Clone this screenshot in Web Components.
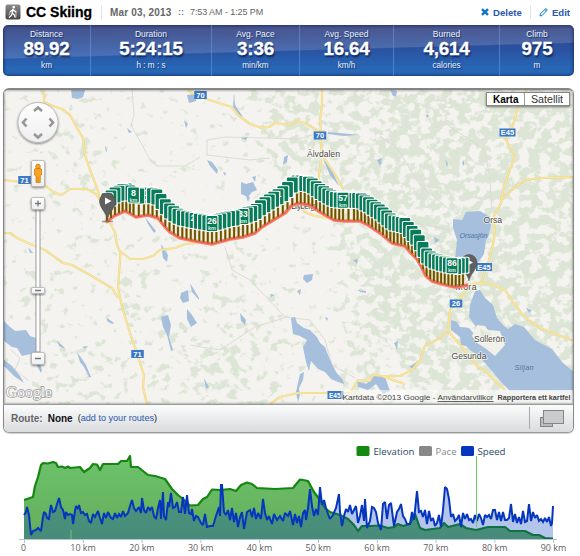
<!DOCTYPE html>
<html lang="en"><head><meta charset="utf-8"><title>CC Skiing</title>
<style>
body{margin:0;background:#fff;width:580px;height:556px;overflow:hidden;font-family:"Liberation Sans",Arial,sans-serif}
</style></head><body>
<activity-page></activity-page>
<script>
const define=(name,html,after)=>{
  const t=document.createElement('template');t.innerHTML=html;
  customElements.define(name,class extends HTMLElement{
    constructor(){super();this.attachShadow({mode:'open'}).append(t.content.cloneNode(true));}
    connectedCallback(){if(after)after(this.shadowRoot,this);}
  });
};
const line=p=>'M'+p.trim().split(/\s+/).join('L');
const pts=p=>p.trim().split(/\s+/).map(s=>s.split(',').map(Number));
const at=(table,x)=>{
  for(let i=1;i<table.length;i++)if(x<=table[i][0]){
    const [a,b]=table[i-1],[c,d]=table[i];return b+(d-b)*(x-a)/(c-a);}
  return table[table.length-1][1];
};

define('activity-header',`<style>
:host{display:flex;align-items:center;height:25px;padding:0 10px 1px 5px;box-sizing:border-box;white-space:nowrap}
svg{flex:none}
h1{font-size:14px;line-height:16px;margin:0 0 0 5px;color:#000;width:67px;-webkit-text-stroke:.3px #000}
.sep{width:1px;height:13px;background:#e2e2e2;margin:0 8px}
.date{font-weight:bold;font-size:10px;letter-spacing:.17px;color:#666;width:62px}
.dots{font-weight:bold;font-size:9px;color:#777;margin:0 6px 0 6px}
.time{font-size:9px;color:#666;letter-spacing:-.08px}
.act{margin-left:auto;display:flex;align-items:center;font-weight:bold;font-size:9.6px;color:#2a56ae}
.act svg{margin-right:4px}.act .sep{margin:0 8px}
</style>
<svg width="16" height="16" viewBox="0 0 16 16"><defs><linearGradient id="g" x2="0" y2="1"><stop stop-color="#8b8b8b"/><stop offset="1" stop-color="#454545"/></linearGradient></defs><rect x=".5" y=".5" width="15" height="15" rx="2" fill="url(#g)"/><g fill="none" stroke="#fff" stroke-width="1.3" stroke-linecap="round"><circle cx="8.7" cy="3.2" r=".7" fill="#fff"/><path d="M8 5.4L7.3 9L9.5 11L10 13.2M7.3 9L6.4 11.4L4.4 13.2M8 5.6L5.6 7.5M8.3 5.8L10.6 7.8"/><path d="M11 7V13M5.3 7.6L4 11" stroke-width=".6"/></g></svg>
<h1>CC Skiing</h1><span class="sep"></span><span class="date">Mar 03, 2013</span><span class="dots">::</span><span class="time">7:53 AM - 1:25 PM</span>
<span class="act"><svg width="8" height="8" viewBox="0 0 8 8"><path d="M1 1.2L7 6.8M7 1.2L1 6.8" stroke="#1673c0" stroke-width="2.5"/></svg>Delete<span class="sep"></span><svg width="9" height="9" viewBox="0 0 9 9"><path d="M1 8L1.5 5.7L6 1.2Q7 .4 7.8 1.2Q8.5 2 7.6 2.9L3.2 7.4ZM5.4 1.8L7 3.4" fill="#eaf5fc" stroke="#1680c8"/></svg>Edit</span>`);

define('stat-cell',`<style>
:host{display:flex;flex-direction:column;align-items:center;color:#fff;position:relative;padding-top:4px;box-sizing:border-box;text-shadow:1px 1px 1px rgba(0,20,70,.65);
border-right:1px solid rgba(110,155,220,.55)}
:host(:last-child){border-right:0}
.l,.u{font-size:8.5px;line-height:10px;color:#eef3fc}.v{font-weight:bold;font-size:18.8px;line-height:20px;height:21px;letter-spacing:-.15px;-webkit-text-stroke:.3px #fff;text-shadow:1px 2px 2px rgba(0,20,70,.8)}
.u{margin-top:1px;font-size:8.2px}
</style><span class="l"><slot name="label"></slot></span><span class="v"><slot></slot></span><span class="u"><slot name="unit"></slot></span>`);

define('stats-bar',`<style>
:host{display:grid;grid-template-columns:88px 121px 88px 94px 106px 74px;width:571px;height:51px;margin-left:3px;border-radius:5px;overflow:hidden;box-sizing:border-box;
background:linear-gradient(178.4deg,rgba(255,255,255,.07),rgba(255,255,255,.15) 49.4%,transparent 51.2%),linear-gradient(#36427f,#2b519f 45%,#2765b5 82%,#2969b8);
box-shadow:inset 0 0 3px 1px rgba(20,35,90,.7)}
</style>
<stat-cell><span slot="label">Distance</span>89.92<span slot="unit">km</span></stat-cell>
<stat-cell><span slot="label">Duration</span>5:24:15<span slot="unit">h : m : s</span></stat-cell>
<stat-cell><span slot="label">Avg. Pace</span>3:36<span slot="unit">min/km</span></stat-cell>
<stat-cell><span slot="label">Avg. Speed</span>16.64<span slot="unit">km/h</span></stat-cell>
<stat-cell><span slot="label">Burned</span>4,614<span slot="unit">calories</span></stat-cell>
<stat-cell><span slot="label">Climb</span>975<span slot="unit">m</span></stat-cell>`);

const ROADS=[
'44,89 44,102 53,106 62,109 70,115 77,128 83,138 85,155 90,170 97,188 107,218 115,232 117,245 120.5,253 118,287 122,307 130,333 138,357 144,375 143,387 147,404',
'4,180 12,181 30,183 46,186 52,191 60,195 65,193 70,189 87,189 96,194 100,200 107,216',
'4,233 10,233 17,238 30,244 45,250 63,263 72,265 90,275 112,288 118,298',
'120,252 124,254 130,259 143,259 153,256 160,250 175,248 185,244 198,243',
'185,86 190,92 200,97 222,104 232,107 238,115 250,124 262,128 269,127 275,123 290,125 297,121 305,123 320,132 322,155 335,174 343,189',
'322,89 322,105 320,120 321,132','321,160 319,175 319,190','298,205 305,212 315,216 334,219',
'527,89 518,107 513,125 505,137 508,144 515,156 508,175 503,190 501,203 494,216 493,222 495,228 494,240 489,260 481,283 470,284',
'501,200 515,187 525,180 540,178 574,177',
'481,283 490,284 505,290 513,302 522,314 530,321 540,328 558,335 574,341',
'468,288 458,300 450,310 448,330 440,338 425,346 420,360 412,370 400,376 380,376',
'448,331 460,345 478,367 485,371 492,378 505,390','270,404 280,397 298,393 330,393 350,393 358,380 370,381 373,374 382,376 390,379 405,384'];
const LAKES=[
'71,89 85,90 83,97 78,99 72,98','4,321 10,327 15,331 26,330 30,336 36,338 37,352 30,354 22,356 17,348 12,347 4,341','4,360 12,366 20,376 24,383 14,376 4,366','36,352 42,370 41,373 37,366',
'57,341 64,347 65,349 59,346','77,352 82,359 86,365 91,377 89,377 84,367 80,362','107,318 114,323 112,324 107,321','82,347 88,346 85,349',
'161,317 168,315 171,325 169,337 173,350 171,351 167,335 163,327','190,283 199,298 199,300 192,292','181,293 188,290 189,301 183,303 180,298','187,309 192,315 197,323 191,327 187,319',
'291,318 295,317 297,323 304,328 310,330 317,337 320,343 325,347 330,360 336,372 343,380 344,384 338,382 331,379 325,372 318,369 311,361 309,371 306,362 303,347 307,340 300,336 293,334',
'300,374 304,372 303,380 299,388 300,395 298,402 296,392','240,313 246,320 245,325 241,321','304,275 313,274 312,280 307,283 303,279','297,291 301,289 300,295','270,294 275,295 271,297',
'357,381 366,384 374,376 385,377 390,391 383,394 376,384 368,390 358,387','204,378 209,387 206,389','28,247 33,253 30,253','161,244 168,255 167,262 163,258','130,254 137,262',
'453,219 462,220 466,212 480,211 490,217 491,225 489,235 486,240 484,254 477,264 468,263 455,260 457,240 453,228',
'475,291 480,290 485,298 493,305 497,318 503,325 508,329 515,324 524,327 535,340 552,349 562,362 574,372 574,391 510,391 500,381 492,371 484,362 479,356 470,350 466,346 461,345 460,337 451,330 451,320 457,322 460,327 469,328 474,334 476,327 469,317 470,305',
'187,95 195,94 196,101 189,103','234,94 235,105 243,117 238,115 233,107','328,132 350,134 358,135 344,136 328,134','323,159 331,168 339,186 330,175','105,146 107,150 106,153',
'207,160 212,162 218,170 217,174 210,166','223,172 226,173 225,176','241,182 246,184 253,182 257,190 252,192 248,197 241,194','252,177 256,176 255,182','246,196 250,197 248,202','284,157 288,155 287,162 283,165','241,138 248,137 246,140','377,160 382,158 380,166',
'391,90 397,91 396,97 392,95','127,128 132,132 129,133','145,217 156,231 154,233 148,224','394,343 398,341 397,350','409,367 417,362 415,369','445,159 448,164 447,167','462,163 464,160 464,166','494,213 505,203 497,210','434,237 440,240 435,243','353,260 358,259 357,264','357,290 366,291 366,293 361,292','325,317 328,318 327,321','184,120 188,124 186,128','380,375 387,390 382,388','380,161 382,163 380,165','526,308 532,310 529,313','426,115 429,115 427,118'];
const TRAIL=pts('106,222 109,220 114,216 125,211 131,214 136,217 148,215 158,218 165,227 170,232 180,238 190,240 200,242 212,244 230,239 243,237 255,233 262,227 275,219 285,213 291,206 298,203 310,205 320,212 334,220 345,221 360,221 368,225 380,233 392,243 405,246 411,253 417,259 422,268 426,276 432,281 442,284 455,287 468,285');
const KM=pts('1,107 4,119 8,133.5 10,144 26,212 33,243 41,278 45,297 57,343 59,354 86,452 89,463');
/* Text left readable on the stacked kilometre signs: [glyphs, x offset, width, unit] */
const FACES={8:['8',0,5,'km'],10:['0',1.5,5,'m'],22:['2',-2,4.5,''],26:['26',0,9.5,'km'],33:['33',0,9.5,'km'],41:['1',1.5,4,''],46:['4',0,4.5,''],57:['57',0,9.5,'km'],59:['9',2.5,5,'m'],86:['86',0,9.5,'km']};

define('route-map',`<style>:host{display:block;height:314px}svg{display:block}
text{font-family:"Liberation Sans",Arial,sans-serif}</style>
<svg width="569" height="314" viewBox="4 90 569 314">
<defs>
<filter id="forest" filterUnits="userSpaceOnUse" x="4" y="88" width="570" height="317" color-interpolation-filters="sRGB">
<feGaussianBlur in="SourceGraphic" stdDeviation="8" result="d"/>
<feTurbulence type="fractalNoise" baseFrequency=".1 .115" numOctaves="3" seed="5"/>
<feColorMatrix values="0 0 0 0 0  0 0 0 0 0  0 0 0 0 0  1 0 0 0 0" result="n"/>
<feComposite in="n" in2="d" operator="arithmetic" k2="1" k3=".34"/>
<feColorMatrix values="0 0 0 0 .867  0 0 0 0 .902  0 0 0 0 .839  0 0 0 9 -5.85"/></filter>
<filter id="sh" x="-30%" y="-30%" width="160%" height="170%"><feDropShadow dx="0" dy="1" stdDeviation="1" flood-opacity=".5"/></filter>
<linearGradient id="b" x2="0" y2="1"><stop stop-color="#fff"/><stop offset="1" stop-color="#eee"/></linearGradient>
</defs>
<rect x="4" y="88" width="571" height="317" fill="#f4f3ef"/>
<g filter="url(#forest)"><path fill-opacity=".68" d="M385 80H600V420H430L385 340L370 280L375 190Z"/><path fill-opacity=".5" d="M240 80H385V420H345L350 300L330 240L345 200L300 170L260 110ZM78 135H96V200H84ZM120 260H142V320H120ZM225 240H245V275H228ZM190 340H235V404H190Z"/><path fill-opacity=".3" d="M45 110H75V190H60ZM75 200H100V238H75ZM40 345H120V404H40ZM20 270H60V320H25ZM130 315H185V404H155ZM205 290H290V404H235ZM240 110H310V180H270Z"/></g>
<g fill="none" stroke="#dcdbd5" stroke-width="1"><path d="M132 89L134 115L131 125L140 141L150 160L157 166L185 166L200 157M207 155V140L225 137L300 139L325 130M225 247L232 270L250 280L285 317L310 320L325 340L332 365L355 378M190 345L220 350L255 327L287 317M380 136L397 148L420 185L450 210M440 120L485 150L490 180L492 210M500 200L520 180M207 155L250 160L270 158M400 220L450 230M10 349L20 358L15 370L28 380"/></g>
<g id="lakes" fill="#a5bfdd"></g>
<path d="M477 325L485 326L488 330L500 331L505 345L495 356L485 348L477 343L472 336Z" fill="#f1f1ea"/><path d="M480 328l5 4 6 1-2 7-8-3zM495 335l5 3-4 6z" fill="#dfe7d7"/>
<g id="roads" fill="none" stroke-linejoin="round"></g>
<g id="shields"></g><g id="towns"></g>
<g id="trail"></g>
<g id="controls">
<circle cx="38" cy="122.500" r="20" fill="url(#b)" stroke="#aaa" stroke-width=".7" filter="url(#sh)"/>
<path d="M34 111L38 107.500L42 111M34 134L38 137.500L42 134M26.500 118.500L23 122.500L26.500 126.500M49.500 118.500L53 122.500L49.500 126.500" fill="none" stroke="#969696" stroke-width="2.600"/>
<rect x="31.500" y="160.500" width="13" height="26" rx="1.500" fill="url(#b)" stroke="#aaa" stroke-width=".7" filter="url(#sh)"/>
<g fill="#f9a51b" stroke="#ba6515" stroke-width=".6"><path d="M34.500 169Q38 167 41.500 169V175L40.300 176V182.500H36V176L34.500 175Z"/><circle cx="38" cy="166.500" r="2.400"/></g><path d="M38 177V182" stroke="#c87516" stroke-width=".6"/>
<path d="M36 209H40V352H36Z" fill="#fff" stroke="#999" stroke-width="1"/>
<g fill="url(#b)" stroke="#aaa" stroke-width=".7"><rect x="31.500" y="197.500" width="13" height="12" rx="1.500" filter="url(#sh)"/><rect x="31.500" y="287.500" width="13" height="6" rx="1" filter="url(#sh)"/><rect x="31.500" y="352.500" width="13" height="12" rx="1.500" filter="url(#sh)"/></g>
<path d="M35 203.500H41M38 200.500V206.500M35 290.500H41M35 358.500H41" stroke="#777" stroke-width="1.300"/>
<text x="6" y="396.500" textLength="46" lengthAdjust="spacingAndGlyphs" style="font:15px 'Liberation Serif',serif" fill="#fff" stroke="#9a9a9a" stroke-width="1.400" paint-order="stroke">Google</text>
<rect x="341" y="390" width="154" height="14" fill="#fff" opacity=".5"/><rect x="495" y="390" width="80" height="14" fill="#f5f5f5" opacity=".9"/>
<text x="342.500" y="400" font-size="8" textLength="93" lengthAdjust="spacingAndGlyphs" fill="#444">Kartdata ©2013 Google -</text><text x="437.500" y="400" font-size="8" textLength="56" lengthAdjust="spacingAndGlyphs" fill="#444" text-decoration="underline">Användarvillkor</text><text x="497.500" y="400" font-size="7.500" font-weight="bold" textLength="73" lengthAdjust="spacingAndGlyphs" fill="#444">Rapportera ett kartfel</text>
<rect x="486.500" y="92.500" width="83" height="13" fill="#fff" stroke="#888" filter="url(#sh)"/><path d="M524.500 93V105" stroke="#999"/>
<text x="493" y="102.500" font-size="10" font-weight="bold" textLength="25.500" lengthAdjust="spacingAndGlyphs" fill="#000">Karta</text><text x="531" y="102.500" font-size="10" textLength="32" lengthAdjust="spacingAndGlyphs" fill="#333">Satellit</text>
</g></svg>`,(r)=>{
  const q=s=>r.querySelector(s);
  q('#lakes').innerHTML=LAKES.map(l=>`<path d="${line(l)}Z"/>`).join('');
  const d=ROADS.map(line).join('');
  q('#roads').innerHTML=`<path d="${d}" stroke="#e9d38b" stroke-width="2.200"/><path d="${d}" stroke="#f9e69b" stroke-width="1.400"/>`;
  q('#shields').innerHTML=[[200.5,95,'70'],[320,135.5,'70'],[24.5,180,'71'],[137.5,354,'71'],[507.5,132.5,'E45'],[484,267,'E45'],[456,303.5,'26'],[335.5,395,'E45']].map(([x,y,t],i)=>{
    const w=t.length>2?16:12.5,cx=i===7?334.8:x,fs=i===7?6.5:7.5;return `<rect x="${x-w/2}" y="${y-4}" width="${w}" height="8" fill="#3b78c7"/><text x="${cx}" y="${y+2.7}" font-size="${fs}" font-weight="bold" text-anchor="middle" fill="#fff">${t}</text>`}).join('');
  q('#towns').innerHTML=[[307,157,'Älvdalen',33],[483.5,222.5,'Orsa',18.5],[455.5,289.5,'Mora',21],[474,342,'Sollerön',31],[451.5,359,'Gesunda',35],[291,209,'Blyberg',24]].map(([x,y,t,w])=>`<text x="${x}" y="${y}" font-size="8.700" textLength="${w}" fill="#4b4540" stroke="#fff" stroke-opacity=".75" stroke-width="1.500" paint-order="stroke">${t}</text>`).join('')
   +[[459.5,237.5,'Orsasjön',28],[514.5,369.5,'Siljan',19]].map(([x,y,t,w])=>`<text x="${x}" y="${y}" font-size="7.300" font-style="italic" textLength="${w}" fill="#5374a4">${t}</text>`).join('');
  const td='M'+TRAIL.map(p=>p.join(',')).join('L');
  const pin=(x,y)=>`<g transform="translate(${x} ${y})"><path d="M0 0C-1 -7 -8 -11 -8 -18.500A8 8 0 0 1 8 -18.500C8 -11 1 -7 0 0Z" fill="#606060" stroke="#4d4d4d" stroke-width=".5"/><path d="M-2.500 -22V-15L4 -18.500Z" fill="#fff"/></g>`;
  let s=`<path d="${td}" fill="none" stroke="#fa7d6e" stroke-width="3.500" stroke-linejoin="round"/><path d="${td}" fill="none" stroke="#e54434" stroke-width=".7"/>`+pin(469,281);
  const signs=[],lift={8:2,57:2,33:1,86:3};
  for(let k=1;k<90;k++){const x=at(KM,k),y=at(TRAIL,x);signs.push({k,x,y,z:y+(lift[k]||0)});}
  signs.sort((a,b)=>a.z-b.z);
  for(const {k,x,y} of signs){
    s+=`<g transform="translate(${x.toFixed(1)} ${(y-.5).toFixed(1)})"><path d="M0 -12V0" stroke="#d3b36a" stroke-width="2.600"/><path d="M0 -12V0" stroke="#6b5200" stroke-width="1.800"/><rect x="-6.500" y="-28.500" width="13" height="17" rx="1.500" fill="#fff"/><rect x="-5.400" y="-27.500" width="10.800" height="15" rx="1" fill="#087b59"/>`;
    const f=FACES[k];
    if(f)s+=`<text x="${f[1]-f[2]/2}" y="-19.500" font-size="8.500" font-weight="bold" textLength="${f[2]}" lengthAdjust="spacingAndGlyphs" fill="#fff">${f[0]}</text>`+(f[3]?`<text x="${f[1]}" y="-13.500" font-size="5.500" font-weight="bold" text-anchor="middle" fill="#d8eee5">${f[3]}</text>`:'');
    s+='</g>';
  }
  q('#trail').innerHTML=s+pin(107.5,219.5)+'<path d="M102 221.500H113" stroke="#555" stroke-opacity=".55" stroke-width="1.500"/>';
});

define('route-panel',`<style>
:host{display:block;width:571px;height:345px;margin:12px 0 0 3px;box-sizing:border-box;border:1px solid #888;border-top:2px solid #858585;border-bottom-color:#999;border-radius:6px;overflow:hidden;box-shadow:0 1px 1px rgba(0,0,0,.18)}
.map{height:314px;position:relative;overflow:hidden}
.map::after{content:"";position:absolute;inset:0;box-shadow:inset 0 0 2px 1px rgba(0,0,0,.25);pointer-events:none}
footer{display:flex;align-items:center;height:28px;box-sizing:border-box;border-top:1px solid #999;background:linear-gradient(#fbfcfc,#d9dbdd);padding:0 8px 1px 7px;font-size:10px}
b{margin-right:5px}.r{color:#666}.n{color:#111}.a{font-size:9.100px;color:#222}.a i{font-style:normal;color:#2857ae}
.end{margin-left:auto;display:flex;align-items:center;gap:9px}.end span{width:1px;height:22px;background:#aaa}
</style><div class="map"><route-map></route-map></div>
<footer><b class="r">Route:</b><b class="n">None</b><span class="a">(<i>add to your routes</i>)</span>
<div class="end"><span></span><svg width="26" height="19" viewBox="0 0 26 19"><rect x="1.500" y="8.500" width="12" height="9" fill="#bbb" stroke="#858585"/><rect x="4.500" y="1.500" width="20" height="13" fill="#c9cbcc" stroke="#858585"/></svg></div></footer>`);

const ELEV='24,500 30,498 33,497 35,486 38,477 41,465 43,463 48,463.5 53,462 56,463 58,467 62,466.500 65,468 68,466.500 70,468 80,467 84,472 90,468 93,464 97,464.500 100,470 103,464 118,464 121,461 127,461 130,456 131,467 138,467 148,475 155,476 165,479 172,489 178,495 183,499 188,504 190,505.500 198,505 203,499 207,497 212,489.500 220,490 230,489 236,491 241,485 247,482.500 252,484 257,488 275,489 293,488 300,479.500 303,480 308,481 314,492 320,500 325,508 330,512 340,515 348,519 354,525 358,531 362,526 370,526 380,525.500 388,528 394,527 398,524 403,526 410,524 415,514 420,528 425,530 440,528 444,523 448,527 460,524 466,528 476,530 488,527 505,527 510,531 525,531 533,535 539,535 545,538 553,538.500';
const SPEED='24,515 26,512 27,507 29,515 31,535 33,531 36,530 38,528 40,530 41,531 43,517 44,512 46,514 47,518 49,519 50,511 51,505 53,512 55,511 57,504 59,498 61,507 63,510 65,519 66,512 68,515 70,514 72,515 73,524 75,511 76,506 78,509 79,505 81,513 83,512 85,515 87,514 89,521 91,523 93,514 95,517 98,511 100,518 102,524 104,513 106,518 108,512 111,518 113,519 115,513 117,518 119,514 121,517 123,511 125,516 128,513 130,506 132,500 134,508 136,511 139,507 141,513 142,498 144,510 146,513 148,507 150,510 152,507 154,516 156,519 158,508 160,500 161,519 163,492 164,516 166,520 168,502 169,507 171,493 173,508 175,507 177,502 179,512 181,512 183,497 185,514 187,495 189,513 191,514 192,509 194,521 196,516 198,517 201,523 203,525 205,514 207,527 210,526 213,526 216,516 219,507 220,516 221,485 222,485 224,512 226,515 228,510 230,520 232,508 234,522 236,513 238,527 240,517 242,512 244,529 247,512 250,510 252,517 254,508 256,519 258,513 261,519 263,499 265,513 267,520 269,516 272,524 274,514 277,520 280,516 283,521 285,513 288,516 290,511 293,525 295,514 297,523 299,516 301,527 303,513 305,510 306,520 308,508 310,489 312,506 314,516 316,509 318,515 320,487 322,505 324,500 326,508 328,514 330,519 333,515 336,508 339,494 340,512 342,526 344,516 346,509 348,512 350,505 352,514 354,510 356,506 358,523 360,516 362,505 364,521 365,499 367,528 370,521 372,507 374,508 376,512 378,523 381,530 383,504 385,502 387,519 389,505 391,503 394,526 397,512 399,509 401,504 403,516 405,519 407,524 410,524 412,512 414,520 417,491 419,512 421,511 423,517 425,510 427,524 429,511 431,521 433,518 435,526 437,523 439,515 441,527 443,510 445,487 447,489 449,499 451,517 453,514 455,521 457,519 459,515 461,527 463,513 465,519 467,514 469,520 471,519 473,523 475,515 477,521 479,514 481,518 483,525 485,515 487,517 489,515 491,519 493,510 495,510 497,520 499,512 501,521 503,512 505,520 507,520 509,518 511,504 513,522 515,514 517,523 519,517 521,524 523,511 525,522 527,521 529,504 531,521 533,512 535,518 537,515 539,521 541,519 543,522 545,518 547,522 549,517 551,526 552,523 553,506';
define('activity-chart',`<style>:host{display:block;margin-top:2px}svg{display:block}text{font-family:"Open Sans","Noto Sans",sans-serif}</style>
<svg width="580" height="121" viewBox="0 435 580 121"><defs><linearGradient id="e" gradientUnits="userSpaceOnUse" y1="455" y2="539" x2="0"><stop stop-color="#6dc36d"/><stop offset="1" stop-color="#64ad59"/></linearGradient></defs>
<g id="plot"></g><g id="axis"></g>
<rect x="356.500" y="446" width="13" height="10" rx="1.500" fill="#168a10"/><rect x="419" y="446" width="13" height="10" rx="1.500" fill="#888"/><rect x="461" y="446" width="13" height="10" rx="1.500" fill="#0636bd"/>
<g font-size="9.600"><text x="373.500" y="454.500" textLength="41" lengthAdjust="spacingAndGlyphs" fill="#2c4963">Elevation</text><text x="435.500" y="454.500" textLength="21" lengthAdjust="spacingAndGlyphs" fill="#888">Pace</text><text x="477.500" y="454.500" textLength="28" lengthAdjust="spacingAndGlyphs" fill="#2c4963">Speed</text></g></svg>`,(r)=>{
  r.querySelector('#plot').innerHTML=`<path d="${line(ELEV)}V539H24Z" fill="url(#e)"/><path d="${line(ELEV)}" fill="none" stroke="#158710" stroke-width="2.200" stroke-linejoin="round"/>
  <path d="${line(SPEED)}V539H24Z" fill="#0640c0" fill-opacity=".3"/><path d="${line(SPEED)}" fill="none" stroke="#0636bd" stroke-width="2" stroke-linejoin="miter" stroke-miterlimit="2"/>
  <path d="M476.500 456V527M71 530V539" stroke="#74c36b"/>`;
  let s='<path d="M19 539.500H557" stroke="#b2c4d6"/>';
  for(let i=0;i<10;i++){const x=24.5+i*58.8,w=i?25.5:5,c=x-(i?.2:1);s+=`<path d="M${x} 540V543" stroke="#b2c4d6"/><text x="${c-w/2}" y="551" font-size="9" textLength="${w}" lengthAdjust="spacingAndGlyphs" fill="#606060">${i?i*10+' km':'0'}</text>`;}
  r.querySelector('#axis').innerHTML=s;
});

define('activity-page',`<style>:host{display:flex;flex-direction:column;width:580px;height:556px;background:#fff}</style>
<activity-header></activity-header><stats-bar></stats-bar><route-panel></route-panel><activity-chart></activity-chart>`);
</script></body></html>
